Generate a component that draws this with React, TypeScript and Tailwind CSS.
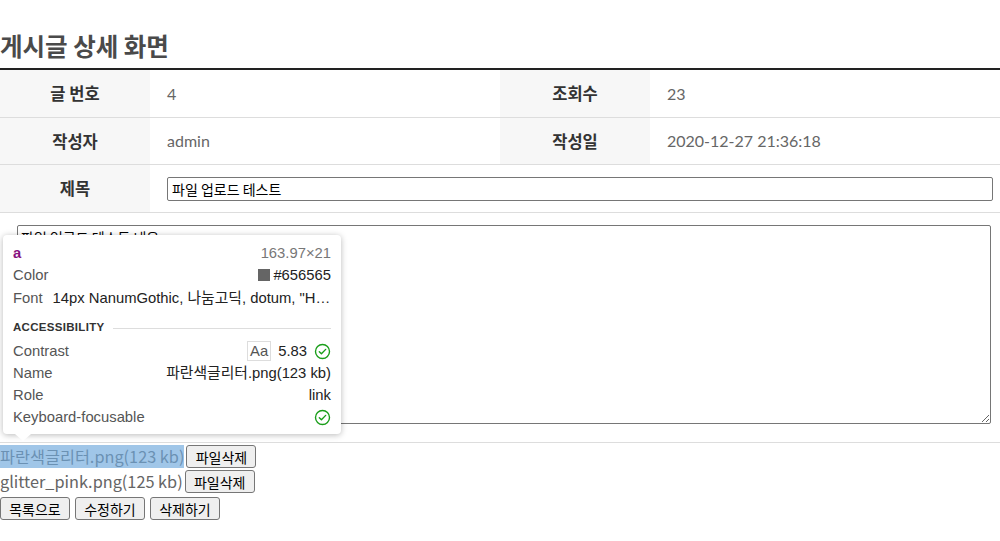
import React from "react";

const KR = { fontFamily: '"Noto Sans CJK KR", "Noto Sans", sans-serif' };
const VAL = { fontFamily: 'Lato, "Noto Sans CJK KR", sans-serif' };
const TT = { fontFamily: '"Liberation Sans", "Noto Sans CJK KR", sans-serif' };

function Check() {
  return (
    <svg width="17" height="17" viewBox="0 0 16 16" fill="none">
      <circle cx="8" cy="8" r="6.6" stroke="#1a9e1a" strokeWidth="1.3" />
      <path d="M5 8.2l2 2 4-4.2" stroke="#1a9e1a" strokeWidth="1.3" strokeLinecap="round" strokeLinejoin="round" />
    </svg>
  );
}

function Tooltip() {
  return (
    <div
      className="absolute left-[3px] top-[235px] w-[338px] h-[199px] bg-white rounded-[4px] shadow-[0_1px_6px_rgba(0,0,0,0.28)] px-[10px] pt-[8px] text-[14.8px] text-[#222]"
      style={TT}
    >
      <div className="flex justify-between items-center h-[20px]">
        <span className="text-[#881280] font-bold">a</span>
        <span className="text-[#777]">163.97×21</span>
      </div>
      <div className="flex justify-between items-center h-[24px]">
        <span className="text-[#555]">Color</span>
        <span className="flex items-center gap-[3px]">
          <span className="inline-block w-[12px] h-[12px] bg-[#656565]"></span>#656565
        </span>
      </div>
      <div className="flex items-center h-[22px] gap-[10px] whitespace-nowrap">
        <span className="text-[#555]">Font</span>
        <span className="overflow-hidden text-ellipsis">14px NanumGothic, 나눔고딕, dotum, "H…</span>
      </div>
      <div className="flex items-center gap-[9px] h-[20px] mt-[9px]">
        <span className="text-[11.5px] font-bold text-[#333] tracking-[0.3px]">ACCESSIBILITY</span>
        <span className="flex-1 h-px bg-[#ddd]"></span>
      </div>
      <div className="flex justify-between items-center h-[22px] mt-[2px]">
        <span className="text-[#555]">Contrast</span>
        <span className="flex items-center gap-[7px]">
          <span className="border border-[#ddd] px-[2px] leading-[18px] text-[#555]">Aa</span>
          <span>5.83</span>
          <Check />
        </span>
      </div>
      <div className="flex justify-between items-center h-[22px]">
        <span className="text-[#555]">Name</span>
        <span>파란색글리터.png(123 kb)</span>
      </div>
      <div className="flex justify-between items-center h-[22px]">
        <span className="text-[#555]">Role</span>
        <span>link</span>
      </div>
      <div className="flex justify-between items-center h-[22px]">
        <span className="text-[#555]">Keyboard-focusable</span>
        <Check />
      </div>
      <div className="absolute left-[12px] bottom-[-7px] w-0 h-0 border-l-[8px] border-r-[8px] border-t-[7px] border-l-transparent border-r-transparent border-t-white"></div>
    </div>
  );
}

function Btn({ children }: { children: React.ReactNode }) {
  return (
    <button
      className="h-[23px] w-[70px] bg-[#efefef] border border-[#767676] rounded-[3px] text-[14px] leading-[20px] text-black"
      style={KR}
    >
      {children}
    </button>
  );
}

export default function App() {
  return (
    <div className="relative w-[1000px] h-[541px] bg-white overflow-hidden" style={KR}>
      <div className="pt-[30px] pb-[6px] text-[24.5px] leading-[32px] font-bold text-[#4a4a4a]">게시글 상세 화면</div>
      <div className="border-t-2 border-[#222]">
        <div className="grid grid-cols-[150px_350px_150px_350px] h-[48px] border-b border-[#ddd] items-stretch">
          <div className="bg-[#f7f7f7] flex items-center justify-center font-bold text-[16.5px] text-[#333]">글 번호</div>
          <div className="flex items-center pl-[17px] text-[16px] text-[#666]" style={VAL}>4</div>
          <div className="bg-[#f7f7f7] flex items-center justify-center font-bold text-[16.5px] text-[#333]">조회수</div>
          <div className="flex items-center pl-[17px] text-[16px] text-[#666]" style={VAL}>23</div>
        </div>
        <div className="grid grid-cols-[150px_350px_150px_350px] h-[47px] border-b border-[#ddd]">
          <div className="bg-[#f7f7f7] flex items-center justify-center font-bold text-[16.5px] text-[#333]">작성자</div>
          <div className="flex items-center pl-[17px] text-[16px] text-[#666]" style={VAL}>admin</div>
          <div className="bg-[#f7f7f7] flex items-center justify-center font-bold text-[16.5px] text-[#333]">작성일</div>
          <div className="flex items-center pl-[17px] text-[16px] text-[#666]" style={VAL}>2020-12-27 21:36:18</div>
        </div>
        <div className="grid grid-cols-[150px_850px] h-[48px] border-b border-[#ddd]">
          <div className="bg-[#f7f7f7] flex items-center justify-center font-bold text-[16.5px] text-[#333]">제목</div>
          <div className="flex items-center pl-[17px] pr-[7px]">
            <input
              readOnly
              value="파일 업로드 테스트"
              className="w-full h-[24px] border border-[#767676] rounded-[2px] px-[4px] text-[14px] text-black outline-none"
              style={KR}
            />
          </div>
        </div>
        <div className="h-[230px] border-b border-[#ddd] pl-[17px] pr-[9px] pt-[12px]">
          <textarea
            readOnly
            value="파일 업로드 테스트 내용"
            className="block w-full h-[199px] border border-[#767676] rounded-[2px] px-[3px] py-[1px] text-[14px] text-black outline-none"
            style={KR}
          />
        </div>
      </div>
      <div className="pt-[2px] flex flex-col gap-[2px]">
        <div className="flex items-center gap-[2px]">
          <span className="relative text-[16.3px] leading-[23px] text-[#656565]">
            파란색글리터.png(123 kb)
            <span className="absolute inset-0 bg-[rgba(111,168,220,0.66)]"></span>
          </span>
          <Btn>파일삭제</Btn>
        </div>
        <div className="flex items-center gap-[2px]">
          <span className="text-[16.3px] leading-[23px] text-[#656565]">glitter_pink.png(125 kb)</span>
          <Btn>파일삭제</Btn>
        </div>
        <div className="flex items-center gap-[5px] mt-[2px]">
          <Btn>목록으로</Btn>
          <Btn>수정하기</Btn>
          <Btn>삭제하기</Btn>
        </div>
      </div>
      <Tooltip />
    </div>
  );
}
